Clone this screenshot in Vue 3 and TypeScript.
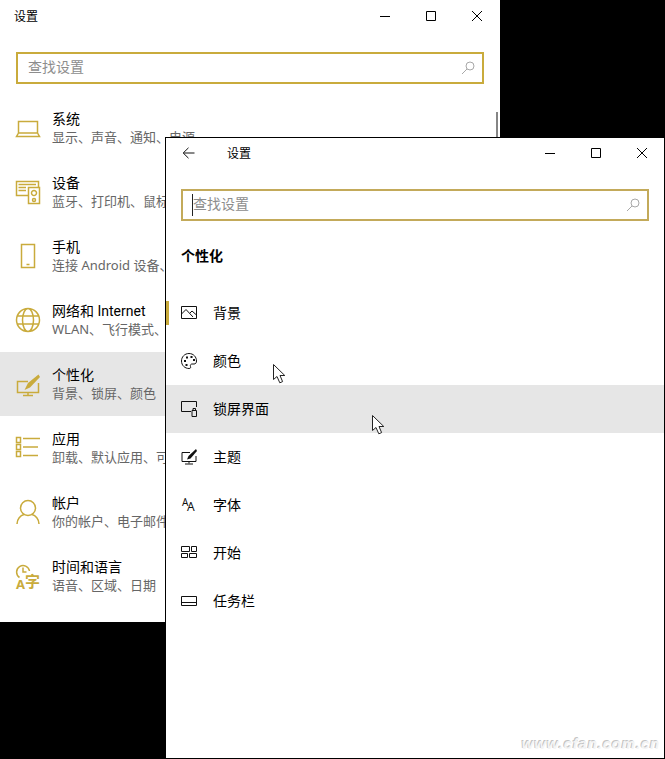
<script setup lang="ts">
interface Icon {
  d: string
  fill?: string
  texts?: { x: number; y: number; size: number; value: string }[]
}
interface MainItem { title: string; sub: string; icon: Icon; active?: boolean }
interface SubItem { label: string; icon: Icon; active?: boolean; hover?: boolean }

const mainItems: MainItem[] = [
  { title: '系统', sub: '显示、声音、通知、电源', icon: { d: 'M2.5 17V5.5H21.5V17M2.5 17L.5 20.5H23.5L21.5 17Z' } },
  {
    title: '设备', sub: '蓝牙、打印机、鼠标',
    icon: {
      d: 'M12 15.5H.5V1.5H22.5V7M12.5 7.5H23.5V23.5H12.5ZM2.5 4.5H20M2.5 7.5H10M2.5 10.5H10M20.5 13A2.5 2.5 0 1 1 15.5 13A2.5 2.5 0 1 1 20.5 13ZM19.5 20A1.5 1.5 0 1 1 16.5 20A1.5 1.5 0 1 1 19.5 20Z'
    }
  },
  { title: '手机', sub: '连接 Android 设备、iPhone', icon: { d: 'M5.5 .5H18.5V23.5H5.5ZM10.5 20.5H13.5' } },
  {
    title: '网络和 Internet', sub: 'WLAN、飞行模式、VPN',
    icon: { d: 'M23.5 12A11.5 11.5 0 1 1 .5 12A11.5 11.5 0 1 1 23.5 12ZM17.5 12A5.5 11.5 0 1 1 6.5 12A5.5 11.5 0 1 1 17.5 12ZM1.5 8H22.5M1.5 16H22.5' }
  },
  {
    title: '个性化', sub: '背景、锁屏、颜色', active: true,
    icon: {
      d: 'M12 9.5H1.5V20.5H22.5V11M12 20.5V23M7 23.5H17',
      fill: 'M22.5 2.5L12 11L8.5 18L14 15.5L24 5Z'
    }
  },
  {
    title: '应用', sub: '卸载、默认应用、可选功能',
    icon: { d: 'M.5 1.5H4.5V6.5H.5ZM.5 8.5H4.5V13.5H.5ZM.5 15.5H4.5V20.5H.5ZM7 2.5H24M7 11H22M7 19.5H22' }
  },
  {
    title: '帐户', sub: '你的帐户、电子邮件、同步设置、工作、家庭',
    icon: { d: 'M19.5 8A7.5 7.5 0 1 1 4.5 8A7.5 7.5 0 1 1 19.5 8ZM1 24C1 19 4.5 15.5 8 14.5M23 24C23 19 19.5 15.5 16 14.5' }
  },
  {
    title: '时间和语言', sub: '语音、区域、日期',
    icon: {
      d: 'M3.5 13.5A6.5 6.5 0 1 1 13.5 7M7 3.5V8H10.5',
      texts: [
        { x: 0, y: 25, size: 13, value: 'A' },
        { x: 9, y: 23, size: 15, value: '字' }
      ]
    }
  }
]

const subItems: SubItem[] = [
  { label: '背景', active: true, icon: { d: 'M.5 1.5H15.5V13.5H.5ZM.5 9L5 4.5L12 12M9 8L11 6L15.5 10' } },
  {
    label: '颜色',
    icon: {
      d: 'M8 .5C3.5 .5 .5 4 .5 8C.5 12.5 4 15.5 8 15.5C9.5 15.5 10 14.5 9.5 13.5C9 12 9.8 11 11 11H13C14.5 11 15.5 10 15.5 8C15.5 4 12.5 .5 8 .5Z',
      fill: 'M3 7h2v2H3ZM5 3.5h2v2H5ZM9.5 3h2v2H9.5ZM12 6h2v2H12ZM4.5 11h2v2H4.5Z'
    }
  },
  { label: '锁屏界面', hover: true, icon: { d: 'M10 10.5H.5V.5H15.5V6M11 9.5H15.5V15.5H11ZM12 9.5V7.5H14.5V9.5' } },
  {
    label: '主题',
    icon: {
      d: 'M9 3.5H1V12.5H15V7M8 12.5V14.5M4 15H12',
      fill: 'M15 0L7.5 7L6 10.5L9.5 9.5L16 2Z'
    }
  },
  {
    label: '字体',
    icon: {
      d: '',
      texts: [
        { x: 1, y: 9, size: 10, value: 'A' },
        { x: 6, y: 14, size: 12, value: 'A' }
      ]
    }
  },
  { label: '开始', icon: { d: 'M.5 1.5H8.5V6.5H.5ZM10.5 1.5H15.5V6.5H10.5ZM.5 8.5H6.5V12.5H.5ZM8.5 8.5H15.5V12.5H8.5Z' } },
  { label: '任务栏', icon: { d: 'M.5 3.5H15.5V12.5H.5ZM.5 9.5H15.5' } }
]
</script>

<template>
  <div class="desktop">
    <section class="window back">
      <header class="titlebar">
        <span class="title first">设置</span>
        <div class="controls">
          <span class="ctl"><svg width="12" height="12" viewBox="0 0 12 12"><path d="M1 6.5H11" /></svg></span>
          <span class="ctl"><svg width="12" height="12" viewBox="0 0 12 12"><path d="M1.5 1.5H10.5V10.5H1.5Z" /></svg></span>
          <span class="ctl"><svg width="12" height="12" viewBox="0 0 12 12"><path d="M1 1L11 11M11 1L1 11" /></svg></span>
        </div>
      </header>
      <div class="search">
        <span class="placeholder">查找设置</span>
        <svg class="glass" width="14" height="14" viewBox="0 0 14 14"><path d="M13 5A4 4 0 1 1 5 5A4 4 0 1 1 13 5ZM6 8L1 13" /></svg>
      </div>
      <div class="scroll"></div>
      <ul class="main-list">
        <li v-for="item in mainItems" :key="item.title" class="main-row" :class="{ on: item.active }">
          <svg class="main-icon" width="24" height="24" viewBox="0 0 24 24">
            <path v-if="item.icon.d" :d="item.icon.d" />
            <path v-if="item.icon.fill" class="solid" :d="item.icon.fill" />
            <text v-for="t in item.icon.texts" :key="t.value" :x="t.x" :y="t.y" :font-size="t.size">{{ t.value }}</text>
          </svg>
          <div class="main-text">
            <div class="main-title">{{ item.title }}</div>
            <div class="main-sub">{{ item.sub }}</div>
          </div>
        </li>
      </ul>
    </section>

    <section class="window front">
      <header class="titlebar">
        <span class="back-btn">
          <svg width="14" height="12" viewBox="0 0 14 12"><path d="M12.5 6H1.5M6.5 .8L1.2 6L6.5 11.2" /></svg>
        </span>
        <span class="title second">设置</span>
        <div class="controls">
          <span class="ctl"><svg width="12" height="12" viewBox="0 0 12 12"><path d="M1 6.5H11" /></svg></span>
          <span class="ctl"><svg width="12" height="12" viewBox="0 0 12 12"><path d="M1.5 1.5H10.5V10.5H1.5Z" /></svg></span>
          <span class="ctl"><svg width="12" height="12" viewBox="0 0 12 12"><path d="M1 1L11 11M11 1L1 11" /></svg></span>
        </div>
      </header>
      <div class="search focus">
        <span class="caret"></span>
        <span class="placeholder">查找设置</span>
        <svg class="glass" width="14" height="14" viewBox="0 0 14 14"><path d="M13 5A4 4 0 1 1 5 5A4 4 0 1 1 13 5ZM6 8L1 13" /></svg>
      </div>
      <h2 class="heading">个性化</h2>
      <ul class="sub-list">
        <li v-for="item in subItems" :key="item.label" class="sub-row" :class="{ on: item.hover }">
          <span v-if="item.active" class="indicator"></span>
          <svg class="sub-icon" width="16" height="16" viewBox="0 0 16 16">
            <path v-if="item.icon.d" :d="item.icon.d" />
            <path v-if="item.icon.fill" class="solid" :d="item.icon.fill" />
            <text v-for="t in item.icon.texts" :key="t.size" :x="t.x" :y="t.y" :font-size="t.size">{{ t.value }}</text>
          </svg>
          <span class="sub-label">{{ item.label }}</span>
        </li>
      </ul>
      <div class="watermark">www.cfan.com.cn</div>
    </section>

    <svg class="cursor c1" width="14" height="20" viewBox="0 0 14 20"><path d="M.5 .5V15.5L4 12.5L6.8 18.8L9.6 17.6L7 11.5H11.8Z" /></svg>
    <svg class="cursor c2" width="14" height="20" viewBox="0 0 14 20"><path d="M.5 .5V15.5L4 12.5L6.8 18.8L9.6 17.6L7 11.5H11.8Z" /></svg>
  </div>
</template>

<style>
html, body { background: #000; margin: 0; overflow: hidden; }
</style>

<style scoped>
.desktop {
  position: relative;
  width: 665px;
  height: 759px;
  overflow: hidden;
  background: #000;
  font-family: "Noto Sans", "Noto Sans CJK SC", sans-serif;
  color: #000;
}
.window {
  position: absolute;
  width: 500px;
  height: 622px;
  box-sizing: border-box;
  background: #fff;
}
.back { left: 0; top: 0; }
.front { left: 165px; top: 137px; border: 1px solid #000; }
.titlebar { display: flex; align-items: center; height: 32px; }
.front .titlebar { height: 31px; }
.title { font-size: 12px; line-height: 16px; margin-top: 1px; }
.first { margin-left: 14px; }
.second { margin-left: 14px; margin-top: 0; }
.back-btn { width: 47px; display: flex; justify-content: center; padding-right: 2px; box-sizing: border-box; margin-top: -2px; }
.back-btn svg { fill: none; stroke: #111; stroke-width: 1; }
.controls { display: flex; margin-left: auto; }
.front .controls { margin: -2px -1px 0 auto; }
.ctl { width: 46px; height: 32px; display: flex; align-items: center; justify-content: center; }
.ctl svg { fill: none; stroke: #000; stroke-width: 1; }
.search {
  display: flex;
  align-items: center;
  box-sizing: border-box;
  margin: 20px 16px 0;
  width: 468px;
  height: 32px;
  border: 2px solid #c9ab3c;
  padding: 0 7px 0 10px;
}
.search.focus { margin-left: 15px; border-color: #c3aa5a; position: relative; }
.caret { position: absolute; left: 9px; top: 3px; width: 1px; height: 22px; background: #222; }
.placeholder { font-size: 14px; line-height: 20px; color: #8d8d8d; margin-top: -2px; }
.glass { margin-left: auto; fill: none; stroke: #a8a8a8; stroke-width: 1; }
.scroll { position: absolute; left: 496px; top: 112px; width: 2px; height: 26px; background: #858585; }
.main-list { list-style: none; margin: 12px 0 0; padding: 0; }
.main-row { display: flex; height: 64px; padding-left: 16px; box-sizing: border-box; white-space: nowrap; }
.main-row.on { background: #e6e6e6; }
.main-icon { flex: none; margin-top: 20px; fill: none; stroke: #c9ab3c; stroke-width: 1.5; overflow: visible; }
.main-icon text { fill: #c9ab3c; stroke: none; font-weight: 700; font-family: "Noto Sans", "Noto Sans CJK SC", sans-serif; }
.main-text { margin: 14px 0 0 12px; }
.main-title { font-family: Roboto, "Noto Sans CJK SC", sans-serif; font-size: 14px; line-height: 18px; color: #000; }
.main-sub { font-size: 13px; line-height: 18px; color: #666; }
.solid { fill: #c9ab3c; stroke: none; }
.heading { margin: 25px 0 0 15px; font-size: 14px; line-height: 20px; font-weight: 700; }
.sub-list { list-style: none; margin: 23px 0 0; padding: 0; }
.sub-row { position: relative; display: flex; align-items: center; height: 48px; padding-left: 15px; }
.sub-row.on { background: #e6e6e6; }
.indicator { position: absolute; left: 0; top: 12px; width: 3px; height: 24px; background: #c9ab3c; }
.sub-icon { flex: none; fill: none; stroke: #111; stroke-width: 1; overflow: visible; }
.sub-icon .solid { fill: #111; stroke: none; }
.sub-icon text { fill: #111; stroke: none; font-family: "Noto Sans", sans-serif; }
.sub-label { margin-left: 16px; font-size: 14px; line-height: 20px; }
.watermark {
  position: absolute;
  right: 4px;
  bottom: 6px;
  font-family: "Liberation Sans", sans-serif;
  font-style: italic;
  font-weight: 700;
  font-size: 15px;
  letter-spacing: .8px;
  color: #f4f4f4;
  text-shadow: -1px -1px 0 #c4c4c4;
}
.cursor { position: absolute; fill: #fff; stroke: #222; stroke-width: 1; }
.c1 { left: 273px; top: 364px; }
.c2 { left: 372px; top: 415px; }
</style>
